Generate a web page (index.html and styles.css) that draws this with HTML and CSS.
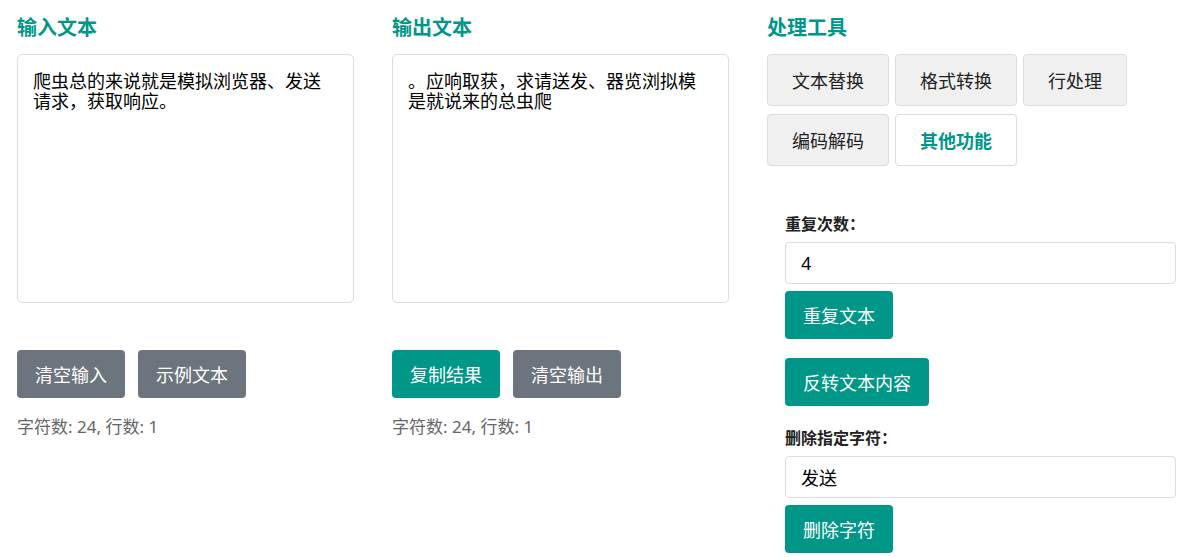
FILE: index.html
```html
<!DOCTYPE html>
<html lang="zh-CN">
<head>
  <meta charset="UTF-8">
  <meta name="viewport" content="width=device-width, initial-scale=1.0">
  <title>文本处理工具</title>
  <link rel="stylesheet" href="styles.css">
</head>
<body>
  <div class="container">
    <div class="column">
      <h3>输入文本</h3>
      <textarea id="input">爬虫总的来说就是模拟浏览器、发送请求，获取响应。</textarea>
      <div class="actions">
        <button class="btn gray">清空输入</button>
        <button class="btn gray">示例文本</button>
      </div>
      <div class="stats">字符数: 24, 行数: 1</div>
    </div>

    <div class="column">
      <h3>输出文本</h3>
      <textarea id="output" readonly>。应响取获，求请送发、器览浏拟模是就说来的总虫爬</textarea>
      <div class="actions">
        <button class="btn">复制结果</button>
        <button class="btn gray">清空输出</button>
      </div>
      <div class="stats">字符数: 24, 行数: 1</div>
    </div>

    <div class="column tools">
      <h3>处理工具</h3>
      <div class="tabs">
        <button class="tab">文本替换</button>
        <button class="tab">格式转换</button>
        <button class="tab">行处理</button>
        <button class="tab">编码解码</button>
        <button class="tab active">其他功能</button>
      </div>

      <div class="panel">
        <div class="group">
          <label for="repeat">重复次数：</label>
          <input type="text" id="repeat" value="4">
          <button class="btn">重复文本</button>
        </div>
        <div class="group single">
          <button class="btn">反转文本内容</button>
        </div>
        <div class="group">
          <label for="remove">删除指定字符：</label>
          <input type="text" id="remove" value="发送">
          <button class="btn">删除字符</button>
        </div>
      </div>
    </div>
  </div>
</body>
</html>
```

FILE: styles.css
```css
body {
  font-family: 'Noto Sans', 'Noto Sans CJK SC', sans-serif;
  margin: 0;
  padding: 0;
  background: #fff;
  color: #222;
}
.container {
  display: flex;
  padding: 18px 0 0 17px;
}
.column {
  width: 375px;
  flex-shrink: 0;
}
.column.tools {
  width: auto;
  flex: 1;
}
h3 {
  margin: 0 0 16px;
  font-size: 20px;
  line-height: 20px;
  font-weight: bold;
  color: #009688;
}
textarea {
  display: block;
  box-sizing: border-box;
  width: 337px;
  height: 249px;
  padding: 15px;
  border: 1px solid #ddd;
  border-radius: 5px;
  font-family: 'Noto Sans CJK SC', sans-serif;
  font-size: 18px;
  line-height: 20px;
  color: #000;
  resize: none;
  outline: none;
}
.actions {
  display: flex;
  gap: 13px;
  margin-top: 47px;
}
.btn {
  padding: 12px 18px;
  font-size: 18px;
  line-height: 24px;
  font-family: 'Noto Sans CJK SC', sans-serif;
  color: #fff;
  background-color: #009688;
  border: none;
  border-radius: 4px;
  cursor: pointer;
}
.btn.gray {
  background-color: #6c757d;
}
.stats {
  margin-top: 19px;
  font-size: 17px;
  line-height: 20px;
  color: #666;
}
.tabs {
  display: flex;
  flex-wrap: wrap;
  gap: 8px 6px;
  width: 375px;
}
.tab {
  height: 52px;
  padding: 0 24px;
  font-size: 18px;
  font-family: 'Noto Sans CJK SC', sans-serif;
  color: #222;
  background: #f0f0f0;
  border: 1px solid #ddd;
  border-radius: 4px;
  cursor: pointer;
}
.tab.active {
  background: #fff;
  color: #009688;
  font-weight: bold;
}
.panel {
  padding: 48px 10px 0 18px;
}
.group {
  display: flex;
  flex-direction: column;
  align-items: flex-start;
  margin-bottom: 19px;
}
.group.single {
  margin-bottom: 22px;
}
.group label {
  font-size: 16px;
  line-height: 20px;
  font-weight: bold;
  color: #222;
  margin-bottom: 8px;
}
.group input {
  box-sizing: border-box;
  width: 100%;
  height: 42px;
  padding: 0 15px;
  font-size: 18px;
  font-family: 'Noto Sans', 'Noto Sans CJK SC', sans-serif;
  color: #000;
  border: 1px solid #ddd;
  border-radius: 4px;
  margin-bottom: 7px;
}
```
